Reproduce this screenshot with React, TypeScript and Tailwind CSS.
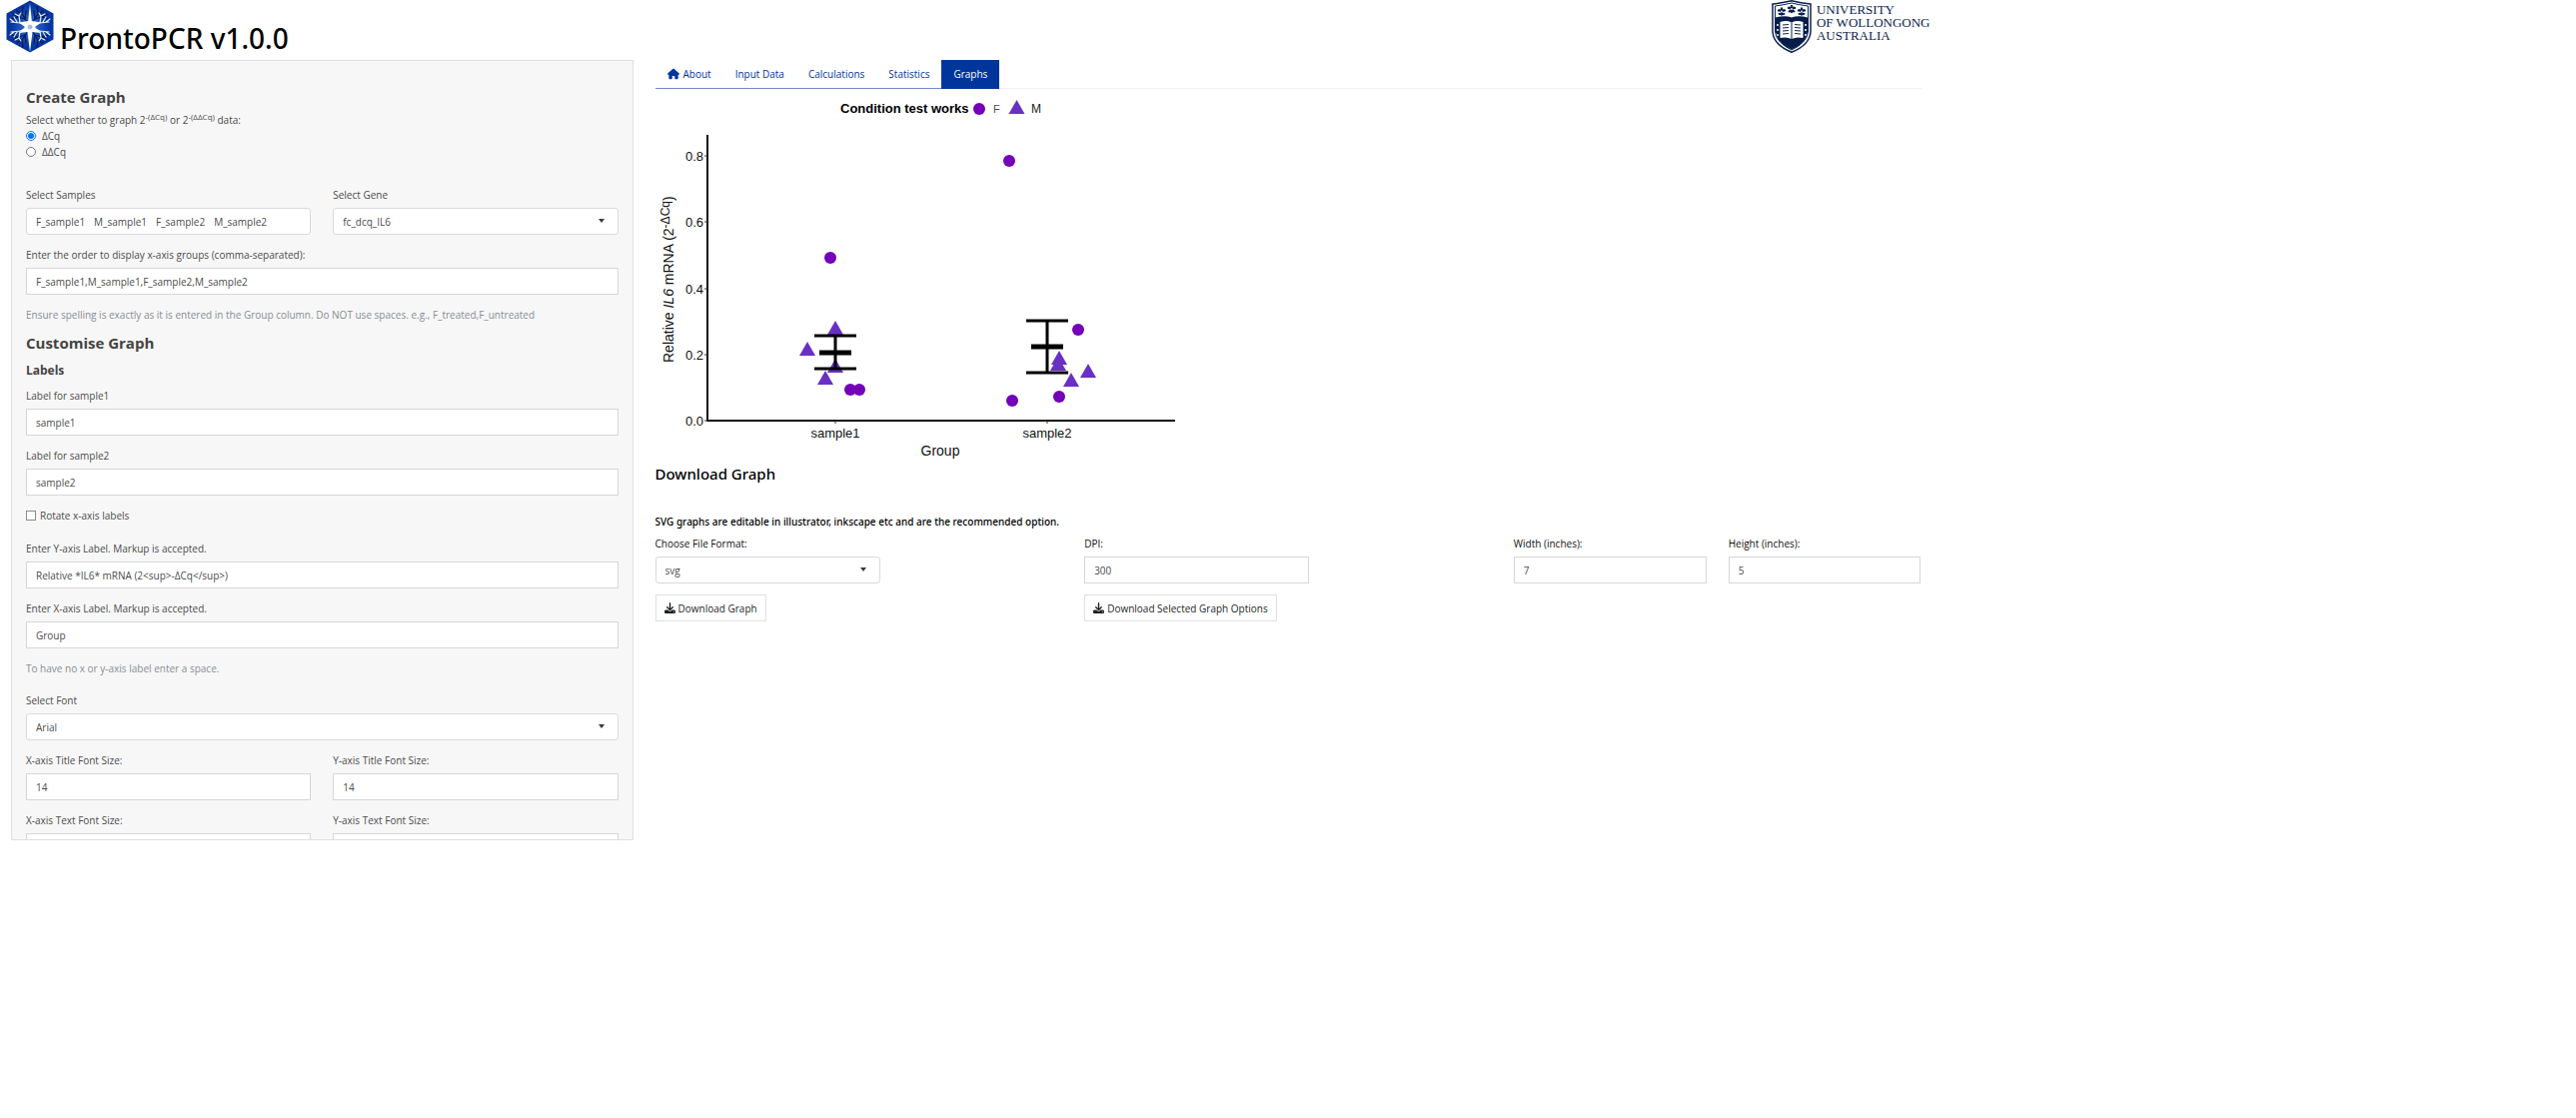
import React from "react";
import { FaDownload, FaHouse } from "react-icons/fa6";

const circles = [
  [831, 258], [1010, 161], [851, 390], [860, 390], [1013, 401], [1060, 397], [1079, 330],
];
const triangles = [
  [836, 321], [808, 342], [836, 359], [826, 371], [1060, 351], [1059, 357], [1072, 373], [1089, 364],
];
const bars = [
  { x: 836, top: 336, mean: 353, low: 369 },
  { x: 1048, top: 321, mean: 347, low: 373 },
];
const yTicks: [string, number][] = [["0.8", 156], ["0.6", 222], ["0.4", 289], ["0.2", 355], ["0.0", 421]];
const xTicks: [string, number][] = [["sample1", 836], ["sample2", 1048]];

function Field({ id, label, value, numeric }: { id: string; label: string; value: string; numeric?: boolean }) {
  return (
    <div className="mb-[11px]">
      <label htmlFor={id} className="mb-1 block">{label}</label>
      <input
        id={id}
        type="text"
        inputMode={numeric ? "numeric" : "text"}
        defaultValue={value}
        className="block h-[27px] w-full border border-[#d5d7db] bg-white px-[9px] text-[#4c4c4c]"
      />
    </div>
  );
}

function SelectField({ id, label, value }: { id: string; label: string; value: string }) {
  return (
    <div className="mb-[11px]">
      <label htmlFor={id} className="mb-1 block">{label}</label>
      <div className="relative">
        <select
          id={id}
          defaultValue={value}
          className="block h-[27px] w-full appearance-none rounded-[3px] border border-[#d8dae0] bg-white px-[9px] text-[#4c4c4c]"
        >
          <option>{value}</option>
        </select>
        <span className="pointer-events-none absolute top-[11px] right-[14px] border-x-[3px] border-t-4 border-x-transparent border-t-[#343a40]" />
      </div>
    </div>
  );
}

function SampleTokens() {
  return (
    <div className="mb-[11px]">
      <span id="samples-label" className="mb-1 block">Select Samples</span>
      <div
        role="group"
        aria-labelledby="samples-label"
        className="flex h-[27px] items-center gap-[9px] rounded-[3px] border border-[#d8dae0] bg-white px-[9px]"
      >
        {["F_sample1", "M_sample1", "F_sample2", "M_sample2"].map((s) => (
          <button key={s} type="button">{s}</button>
        ))}
      </div>
    </div>
  );
}

function HexLogo() {
  const darkBranch = "M-2-4-8-13M-5-8-12-10M-8-13-7-20M-8-13-13-16M-5-8-4-16M-12-10-18-8M-12-10-17-13";
  const whiteBranch = "M0 0-10 4M-10 4-19 5M-13 5-16 10M-10 4-11 11M-11 11-15 13M-11 11-9 14M-16 5-20 8";
  const flips = ["scale(1 1)", "scale(-1 1)", "scale(1 -1)", "scale(-1 -1)"];
  return (
    <svg viewBox="0 0 48 53" className="h-[53px] w-12" aria-hidden="true">
      <defs>
        <radialGradient id="hexGlow">
          <stop offset="0" stopColor="#3f74d6" />
          <stop offset="0.8" stopColor="#0636a0" />
        </radialGradient>
      </defs>
      <path d="M24 0.500 47.500 13.500V39.500L24 52.500 0.500 39.500V13.500Z" fill="url(#hexGlow)" />
      <g transform="translate(24 27)" fill="none" strokeLinecap="round">
        {flips.map((f) => <path key={f} d={darkBranch} transform={f} stroke="#051a4e" strokeWidth="1.300" />)}
        {flips.map((f) => <path key={f} d={whiteBranch} transform={f} stroke="#e8effb" strokeWidth="1.200" />)}
        <path
          d="M0-24 1.800-6 11-4.500 5 0 11 6 2.500 5 0 25-2.500 5-11 6-5 0-11-4.500-1.800-6Z"
          fill="#fff"
        />
        <circle r="2" fill="#a9c0ea" stroke="#7d9bd6" strokeWidth="0.500" />
      </g>
    </svg>
  );
}

function Shield() {
  return (
    <svg viewBox="0 0 40 53" className="h-[53px] w-10" aria-hidden="true">
      <path d="M1 4Q11 3 20 0.800 29 3 39 4V32Q38 45 20 52.300 2 45 1 32Z" fill="#fff" stroke="#0c2350" strokeWidth="1.500" />
      <path d="M3.500 6Q12 5 20 3 28 5 36.500 6V32Q35 43 20 50 5 43 3.500 32Z" fill="#fff" stroke="#0c2350" />
      <path d="M4 17.500Q13 15 20 17.500 27 15 36 17.500V32Q35 43 20 49.500 5 43 4 32Z" fill="#061c49" />
      <g stroke="#0c2350" strokeWidth="2.200">
        {[[10, 11.5], [20, 9], [30, 11.5]].map(([x, y]) => (
          <g key={x}>
            <path d={`M${x} ${y - 4}v8M${x - 4} ${y - 1}h8M${x - 3} ${y + 3}l6-5M${x + 3} ${y + 3}l-6-5`} />
            <circle cx={x} cy={y} r="0.900" fill="#fff" stroke="none" />
          </g>
        ))}
      </g>
      <path d="M8.500 22Q15 20 20 22.500 25 20 31.500 22V38Q25 36.500 20 39 15 36.500 8.500 38Z" fill="#fff" />
      <path d="M20 22.500V39M11 25l6-.5M11 28l6-.5M11 31l6-.5M11 34l6-.5M23 24.500l6 .5M23 27.500l6 .5M23 30.500l6 .5M23 33.500l6 .5" stroke="#0c2350" />
      <path d="M6 24v2M6 29v2M6 34v2M34 24v2M34 29v2M34 34v2" stroke="#fff" strokeWidth="1.500" />
    </svg>
  );
}

function Chart() {
  return (
    <svg
      viewBox="656 89 525 375"
      className="block h-[375px] w-[525px]"
      fontFamily='"Liberation Sans", Arial, sans-serif'
      role="img"
      aria-label="Relative IL6 mRNA by group"
    >
      <text x="841" y="113" fontSize="13" fontWeight="700">Condition test works</text>
      <circle cx="980" cy="109" r="6" fill="#7400b8" />
      <text x="994" y="113" fontSize="11" fill="#4d4d4d">F</text>
      <path d="M1017.500 100l8 14h-16z" fill="#6930c3" />
      <text x="1032" y="113" fontSize="12" fill="#1a1a1a">M</text>
      {circles.map(([x, y]) => <circle key={x} cx={x} cy={y} r="6" fill="#7400b8" />)}
      {triangles.map(([x, y]) => <path key={`${x}-${y}`} d={`M${x} ${y}l8 14h-16z`} fill="#6930c3" />)}
      {bars.map((b) => (
        <g key={b.x} stroke="#000" strokeWidth="3" fill="none">
          <path d={`M${b.x - 21} ${b.top}h42M${b.x - 21} ${b.low}h42M${b.x} ${b.top}V${b.low}`} />
          <path d={`M${b.x - 16} ${b.mean}h32`} strokeWidth="5" />
        </g>
      ))}
      <path d="M708 135V421H1176" fill="none" stroke="#111" strokeWidth="2" />
      {yTicks.map(([t, y]) => (
        <g key={t}>
          <path d={`M705 ${y}h3`} stroke="#333" />
          <text x="704" y={y + 5} fontSize="13" textAnchor="end" fill="#111">{t}</text>
        </g>
      ))}
      {xTicks.map(([t, x]) => (
        <g key={t}>
          <path d={`M${x} 421v3`} stroke="#333" />
          <text x={x} y="438" fontSize="13" textAnchor="middle" fill="#111">{t}</text>
        </g>
      ))}
      <text x="941" y="456" fontSize="14" textAnchor="middle" fill="#111">Group</text>
      <text transform="translate(674 363) rotate(-90)" fontSize="14" fill="#111">
        Relative <tspan fontStyle="italic">IL6</tspan> mRNA (2<tspan dy="-4" fontSize="12">-ΔCq</tspan><tspan dy="4">)</tspan>
      </text>
    </svg>
  );
}

function Sidebar() {
  return (
    <aside className="h-[781px] overflow-hidden border border-[#e0e0e0] bg-[#f7f7f7] px-3.5 pt-[25px] text-[#4c4c4c]">
      <h2 className="text-[15px] leading-[22px] font-bold text-[#444]">Create Graph</h2>
      <fieldset className="mt-[3px] mb-[26px]">
        <legend className="h-[17px]">
          Select whether to graph 2<sup className="text-[8px]">-(ΔCq)</sup> or 2<sup className="text-[8px]">-(ΔΔCq)</sup> data:
        </legend>
        {["ΔCq", "ΔΔCq"].map((t, i) => (
          <label key={t} className="flex h-4 items-center gap-1.5">
            <input type="radio" name="mode" defaultChecked={i === 0} className="size-[10px]" />
            {t}
          </label>
        ))}
      </fieldset>
      <div className="grid grid-cols-2 gap-x-[22px]">
        <SampleTokens />
        <SelectField id="gene" label="Select Gene" value="fc_dcq_IL6" />
      </div>
      <Field id="order" label="Enter the order to display x-axis groups (comma-separated):" value="F_sample1,M_sample1,F_sample2,M_sample2" />
      <p className="text-[#868e96]">
        Ensure spelling is exactly as it is entered in the Group column. Do NOT use spaces. e.g., F_treated,F_untreated
      </p>
      <h2 className="mt-2 text-[15px] leading-[22px] font-bold text-[#444]">Customise Graph</h2>
      <h3 className="mt-[7px] mb-1.5 text-[12px] leading-5 font-bold text-[#444]">Labels</h3>
      <Field id="label1" label="Label for sample1" value="sample1" />
      <Field id="label2" label="Label for sample2" value="sample2" />
      <label className="mb-[15px] flex items-center gap-1">
        <input type="checkbox" className="size-[10px] appearance-none border border-[#8a8a8a] bg-white" />
        Rotate x-axis labels
      </label>
      <Field id="ylabel" label="Enter Y-axis Label. Markup is accepted." value="Relative *IL6* mRNA (2<sup>-ΔCq</sup>)" />
      <Field id="xlabel" label="Enter X-axis Label. Markup is accepted." value="Group" />
      <p className="mb-3.5 text-[#868e96]">To have no x or y-axis label enter a space.</p>
      <SelectField id="font" label="Select Font" value="Arial" />
      <div className="grid grid-cols-2 gap-x-[22px]">
        <Field id="xtitle" label="X-axis Title Font Size:" value="14" numeric />
        <Field id="ytitle" label="Y-axis Title Font Size:" value="14" numeric />
        <Field id="xtext" label="X-axis Text Font Size:" value="" numeric />
        <Field id="ytext" label="Y-axis Text Font Size:" value="" numeric />
      </div>
    </aside>
  );
}

function Tabs() {
  return (
    <nav className="flex border-b border-[#eef0f2] text-[#00359c]">
      {["About", "Input Data", "Calculations", "Statistics", "Graphs"].map((t) => (
        <a
          key={t}
          href="#"
          aria-current={t === "Graphs" ? "page" : undefined}
          className="-mb-px flex h-[29px] items-center gap-1 border-b border-[#6f8cc8] px-3 aria-[current=page]:border-[#00359c] aria-[current=page]:bg-[#00359c] aria-[current=page]:text-white"
        >
          {t === "About" && <FaHouse className="size-3" />}
          {t}
        </a>
      ))}
    </nav>
  );
}

function DownloadButton({ children }: { children: React.ReactNode }) {
  return (
    <button type="button" className="flex h-[27px] items-center gap-[3px] border border-[#dfe0e2] bg-white px-2 text-[#1c1f26]">
      <FaDownload className="size-[11px]" />
      {children}
    </button>
  );
}

export default function App() {
  return (
    <div className="min-h-screen bg-white font-['Open_Sans','Noto_Sans',sans-serif] text-[10px] leading-[18px] text-[#101010]">
      <div className="w-3/4">
        <header className="flex h-[60px] justify-between pr-0.5 pl-1.5">
          <div className="flex items-start gap-1.5">
            <HexLogo />
            <h1 className="pt-[18px] font-['Noto_Sans',sans-serif] text-[28px] leading-10 font-medium text-black">ProntoPCR v1.0.0</h1>
          </div>
          <div className="flex gap-[5px]">
            <Shield />
            <p className="pt-[3px] font-['Liberation_Serif',serif] text-[13px] leading-[13px] text-[#0c2350]">
              UNIVERSITY<br />OF WOLLONGONG<br />AUSTRALIA
            </p>
          </div>
        </header>
        <div className="grid grid-cols-3">
          <div className="px-[11px]"><Sidebar /></div>
          <main className="col-span-2 px-[11px]">
            <Tabs />
            <Chart />
            <h2 className="font-['Noto_Sans',sans-serif] text-[15px] leading-5 font-medium text-black">Download Graph</h2>
            <p className="mt-[29px] mb-1 font-['Noto_Sans',sans-serif] font-medium text-black">
              SVG graphs are editable in illustrator, inkscape etc and are the recommended option.
            </p>
            <div className="-mr-[22px] grid grid-cols-3">
              <div className="w-[225px]"><SelectField id="format" label="Choose File Format:" value="svg" /></div>
              <div className="w-[225px]"><Field id="dpi" label="DPI:" value="300" numeric /></div>
              <div className="grid grid-cols-2 gap-x-[22px] pr-[22px]">
                <Field id="width" label="Width (inches):" value="7" numeric />
                <Field id="height" label="Height (inches):" value="5" numeric />
              </div>
              <div className="flex"><DownloadButton>Download Graph</DownloadButton></div>
              <div className="flex"><DownloadButton>Download Selected Graph Options</DownloadButton></div>
            </div>
          </main>
        </div>
      </div>
    </div>
  );
}
